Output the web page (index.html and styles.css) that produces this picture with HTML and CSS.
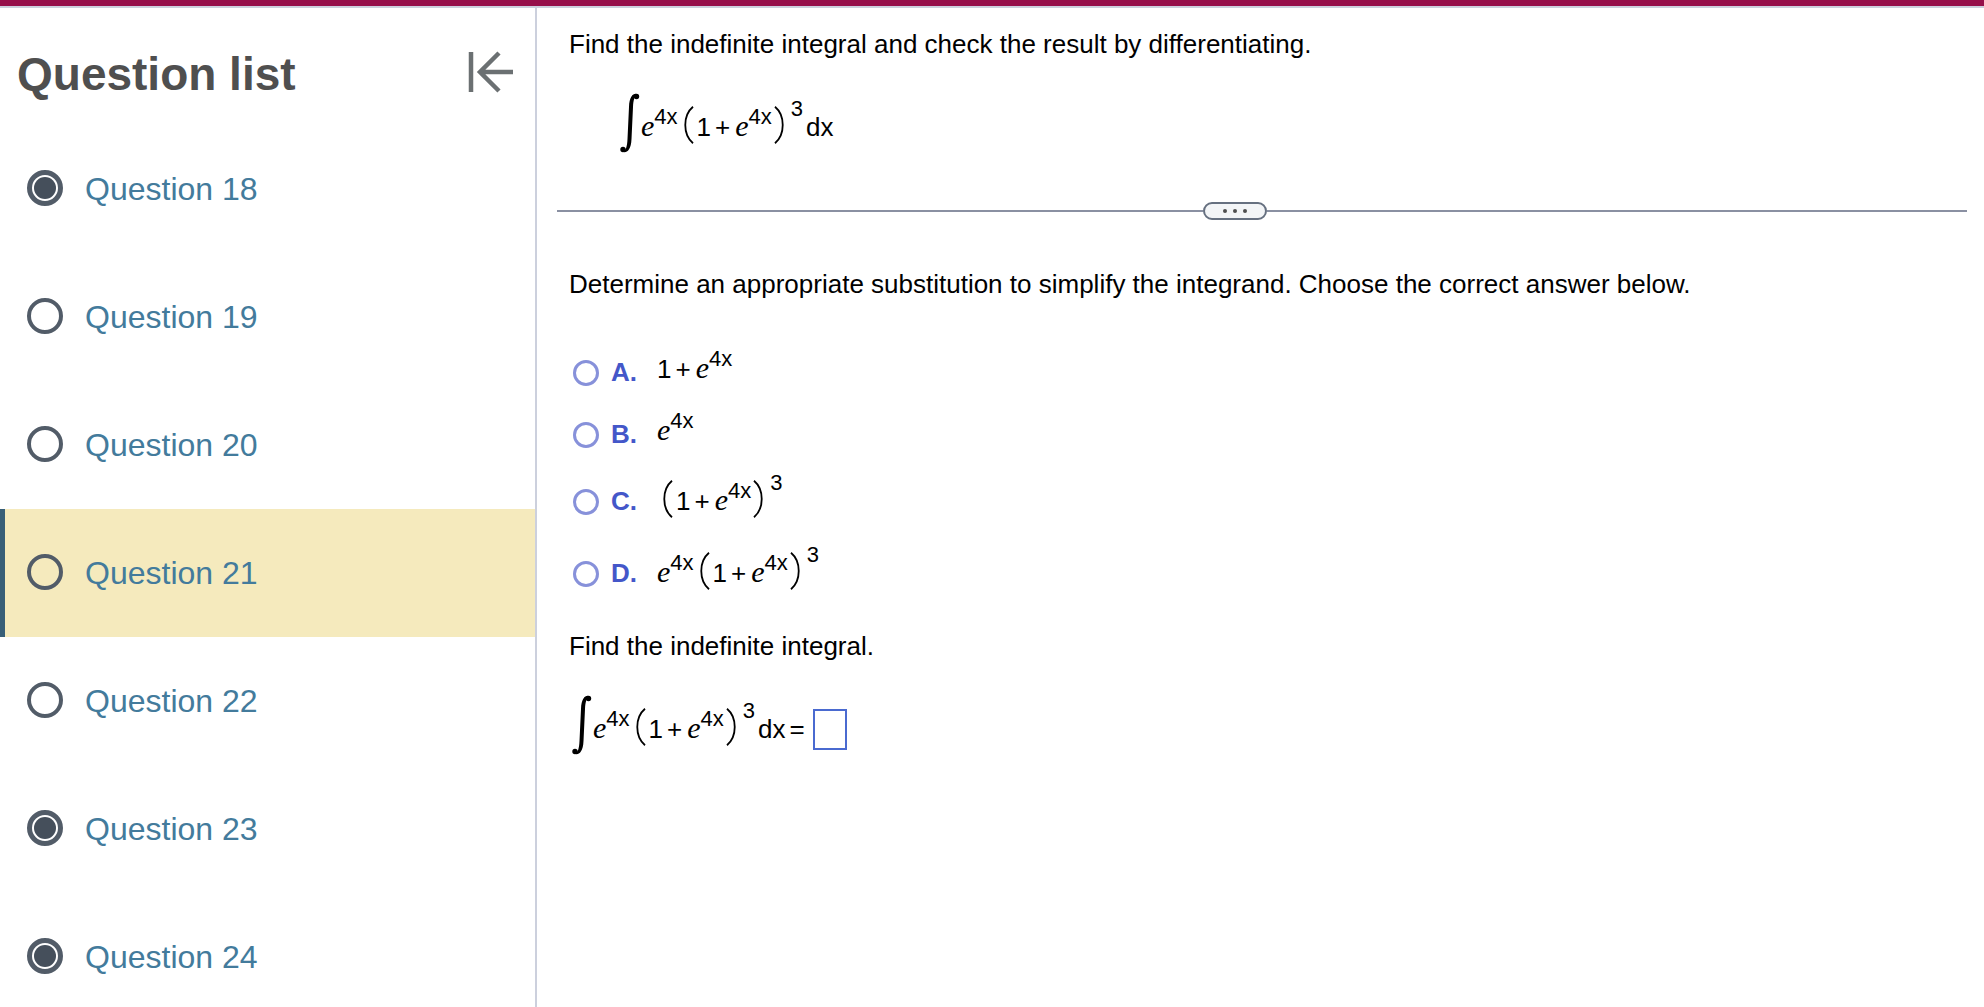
FILE: index.html
```html
<!DOCTYPE html>
<html lang="en">
<head>
    <meta charset="UTF-8">
    <meta name="viewport" content="width=device-width, initial-scale=1.0">
    <title>Question 21</title>
    <link rel="stylesheet" href="styles.css">
</head>
<body>
    <!-- shapes shared by all the formulas -->
    <svg class="defs" aria-hidden="true">
        <symbol id="integral" viewBox="0 0 20 60">
            <path d="M1 57C3 61 11 61 11.500 46L13 14C13.500 4 15.500 2 18 4.500L19 3C17 -1 9.500 -1 9 14L7.500 46C7 56 5 59 2 56Z"/>
            <circle cx="3" cy="56.500" r="2.700"/>
            <circle cx="16.500" cy="3.500" r="2.700"/>
        </symbol>
        <symbol id="open" viewBox="0 0 10 38">
            <path d="M9 .8C-1.300 9.500-1.300 28.500 9 37.200" fill="none" stroke="#000" stroke-width="1.800"/>
        </symbol>
        <symbol id="close" viewBox="0 0 10 38">
            <path d="M1 .8C11.300 9.500 11.300 28.500 1 37.200" fill="none" stroke="#000" stroke-width="1.800"/>
        </symbol>
    </svg>

    <div class="topbar"></div>
    <div class="container">
        <aside class="sidebar">
            <div class="sidebar-header">
                <h1>Question list</h1>
                <button class="collapse-btn" aria-label="Collapse question list">
                    <svg width="46" height="42" viewBox="0 0 46 42" fill="none" stroke="#6b7072" stroke-width="4.500">
                        <path d="M3 1v40M45 21H12M31 2L12 21l19 19"/>
                    </svg>
                </button>
            </div>
            <nav class="question-list">
                <a class="question" href="#q18"><span class="status done"></span>Question 18</a>
                <a class="question" href="#q19"><span class="status"></span>Question 19</a>
                <a class="question" href="#q20"><span class="status"></span>Question 20</a>
                <a class="question current" href="#q21"><span class="status"></span>Question 21</a>
                <a class="question" href="#q22"><span class="status"></span>Question 22</a>
                <a class="question" href="#q23"><span class="status done"></span>Question 23</a>
                <a class="question" href="#q24"><span class="status done"></span>Question 24</a>
            </nav>
        </aside>

        <main class="content">
            <p>Find the indefinite integral and check the result by differentiating.</p>
            <div class="equation problem">
                <span class="math"><svg class="int"><use href="#integral"/></svg><i>e</i><sup>4x</sup><svg class="paren open"><use href="#open"/></svg>1<span class="op">+</span><i>e</i><sup>4x</sup><svg class="paren close"><use href="#close"/></svg><sup class="power">3</sup>dx</span>
            </div>

            <div class="divider">
                <button class="divider-btn" aria-label="Resize panes"><span></span><span></span><span></span></button>
            </div>

            <p>Determine an appropriate substitution to simplify the integrand. Choose the correct answer below.</p>
            <div class="options">
                <label class="option short">
                    <input type="radio" name="answer" value="A">
                    <b>A.</b>
                    <span class="math">1<span class="op">+</span><i>e</i><sup>4x</sup></span>
                </label>
                <label class="option short">
                    <input type="radio" name="answer" value="B">
                    <b>B.</b>
                    <span class="math"><i>e</i><sup>4x</sup></span>
                </label>
                <label class="option">
                    <input type="radio" name="answer" value="C">
                    <b>C.</b>
                    <span class="math"><svg class="paren open"><use href="#open"/></svg>1<span class="op">+</span><i>e</i><sup>4x</sup><svg class="paren close"><use href="#close"/></svg><sup class="power">3</sup></span>
                </label>
                <label class="option">
                    <input type="radio" name="answer" value="D">
                    <b>D.</b>
                    <span class="math"><i>e</i><sup>4x</sup><svg class="paren open"><use href="#open"/></svg>1<span class="op">+</span><i>e</i><sup>4x</sup><svg class="paren close"><use href="#close"/></svg><sup class="power">3</sup></span>
                </label>
            </div>

            <p>Find the indefinite integral.</p>
            <div class="equation">
                <label class="math" for="result"><svg class="int"><use href="#integral"/></svg><i>e</i><sup>4x</sup><svg class="paren open"><use href="#open"/></svg>1<span class="op">+</span><i>e</i><sup>4x</sup><svg class="paren close"><use href="#close"/></svg><sup class="power">3</sup>dx<span class="op">=</span></label>
                <input type="text" id="result" class="answer">
            </div>
        </main>
    </div>
</body>
</html>
```
FILE: styles.css
```css
* {
    box-sizing: border-box;
}

body {
    font-family: "Liberation Sans", Arial, sans-serif;
    margin: 0;
    height: 100vh;
    display: flex;
    flex-direction: column;
    overflow: hidden;
    background-color: #fff;
    color: #000;
}

.defs {
    position: absolute;
    width: 0;
    height: 0;
}

.topbar {
    flex: none;
    height: 8px;
    background: #960f4a;
    border-bottom: 2px solid #ccd0dd;
}

.container {
    flex: 1;
    display: flex;
    min-height: 0;
}

/* Sidebar */
.sidebar {
    flex: none;
    width: 537px;
    border-right: 2px solid #ccd0dd;
    overflow: hidden;
}

.sidebar-header {
    display: flex;
    justify-content: space-between;
    align-items: flex-start;
    padding: 40px 21px 25px 17px;
}

h1 {
    margin: 0;
    font-size: 46px;
    line-height: 52px;
    color: #4f4f4f;
}

.collapse-btn {
    display: flex;
    align-items: center;
    height: 48px;
    padding: 0;
    background: none;
    border: none;
    cursor: pointer;
}

.question {
    display: flex;
    align-items: center;
    gap: 22px;
    height: 128px;
    padding-left: 22px;
    border-left: 5px solid transparent;
    font-size: 32px;
    color: #437b9c;
    text-decoration: none;
}

.question.current {
    background: #f5eabd;
    border-left-color: #385f78;
}

.status {
    width: 36px;
    height: 36px;
    margin-bottom: 2px;
    border: 4px solid #525c68;
    border-radius: 50%;
}

.status.done {
    padding: 2px;
    border-width: 5px;
}

.status.done::before {
    content: "";
    display: block;
    height: 22px;
    border-radius: 50%;
    background: #454f5b;
}

/* Question body */
.content {
    flex: 1;
    min-width: 0;
    padding: 21px 17px 0 20px;
    font-size: 26px;
    line-height: 30px;
}

.content p {
    margin: 0;
    padding-left: 12px;
}

.equation {
    display: flex;
    align-items: flex-end;
    margin: 34px 0 0 15px;
}

.equation.problem {
    margin-left: 63px;
}

.math {
    white-space: nowrap;
}

.math i {
    font-family: "Liberation Serif", "Times New Roman", serif;
    font-size: 30px;
}

.math sup {
    font-size: 22px;
    line-height: 0;
    vertical-align: 12px;
}

.math .power {
    margin: 0 3px 0 7px;
    vertical-align: 20px;
}

.op {
    margin: 0 5px 0 4px;
}

.int {
    width: 20px;
    height: 60px;
    margin-right: 1px;
    vertical-align: -17px;
}

.paren {
    width: 10px;
    height: 38px;
    vertical-align: -8px;
}

.paren.open {
    margin: 0 3px 0 6px;
}

.paren.close {
    margin-left: 2px;
}

.divider {
    display: flex;
    align-items: center;
    margin: 49px 0;
}

.divider::before,
.divider::after {
    content: "";
    flex: 12;
    height: 2px;
    background: #8a90a2;
}

.divider::after {
    flex: 13;
}

.divider-btn {
    display: flex;
    justify-content: center;
    align-items: center;
    gap: 6px;
    width: 64px;
    height: 18px;
    padding: 0;
    background: #f3f5f7;
    border: 2px solid #667080;
    border-radius: 9px;
    cursor: pointer;
}

.divider-btn span {
    width: 4px;
    height: 4px;
    border-radius: 50%;
    background: #4f4f4f;
}

.options {
    margin: 43px 0 21px 16px;
}

.option {
    display: flex;
    align-items: center;
    height: 72px;
}

.option.short {
    height: 62px;
}

.option input {
    appearance: none;
    width: 26px;
    height: 26px;
    margin: 0 12px 0 0;
    border: 3px solid #8791da;
    border-radius: 50%;
}

.option input:checked {
    background: #4457c9;
}

.option b {
    width: 46px;
    padding-bottom: 2px;
    color: #4457c9;
}

.option .math {
    padding-bottom: 6px;
}

.option.short .math {
    padding-bottom: 10px;
}

.answer {
    width: 34px;
    height: 41px;
    margin: 0 0 5px 3px;
    padding: 0 4px;
    border: 2px solid #4a6ad0;
    font-size: 26px;
}
```
